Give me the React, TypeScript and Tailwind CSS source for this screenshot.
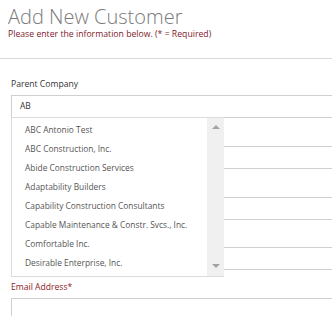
import React from 'react';

const companies = [
    'ABC Antonio Test',
    'ABC Construction, Inc.',
    'Abide Construction Services',
    'Adaptability Builders',
    'Capability Construction Consultants',
    'Capable Maintenance & Constr. Svcs., Inc.',
    'Comfortable Inc.',
    'Desirable Enterprise, Inc.',
];

// fields that sit behind the open dropdown, their labels are covered
const hiddenFields = ['name', 'address', 'city'];

function Field({ label, required, value, children }: { label?: string; required?: boolean; value?: string; children?: React.ReactNode }) {
    return (
        <div className="relative">
            <div
                className={`h-[12px] mb-[5px] text-[8.6px] leading-[12px] font-medium ${
                    required ? 'text-[#8a1c26]' : 'text-[#333]'
                }`}
            >
                {label}
            </div>
            <div className="relative w-[340px] h-[23px] border border-[#cfcfcf] bg-white flex items-center pl-[8px] text-[8.5px] text-[#333]">
                {value}
            </div>
            {children}
        </div>
    );
}

function CompanyDropdown() {
    return (
        <div className="absolute z-10 left-0 top-[39px] w-[213px] h-[160px] bg-white border-t border-b border-l border-[#dcdcdc] flex">
            <ul className="flex-1 pt-[2px] pl-[13px] text-[8.4px] text-[#555] leading-[19px]">
                {companies.map((c) => (
                    <li key={c} className="h-[19px] whitespace-nowrap">
                        {c}
                    </li>
                ))}
            </ul>
            <div className="w-[17px] h-full bg-[#f0f0f0] flex flex-col items-center justify-between pt-[7px] pb-[8px]">
                <span className="block w-0 h-0 border-l-[4px] border-r-[4px] border-b-[4px] border-l-transparent border-r-transparent border-b-[#a3a3a3]" />
                <span className="block w-0 h-0 border-l-[4px] border-r-[4px] border-t-[4px] border-l-transparent border-r-transparent border-t-[#a3a3a3]" />
            </div>
        </div>
    );
}

export default function App() {
    return (
        <div
            className="w-[332px] h-[316px] overflow-hidden bg-white"
            style={{ fontFamily: '"Open Sans", "Liberation Sans", sans-serif' }}
        >
            <div className="pl-[8px] pt-[5px]">
                <h1 className="text-[20px] leading-[24px] text-[#7a7a7a] font-light">Add New Customer</h1>
                <p className="text-[8.7px] leading-[10px] text-[#7d1a2c]">
                    Please enter the information below. (* = Required)
                </p>
            </div>

            <div className="mt-[19px] h-px bg-[#dadada]" />

            <div className="mt-[19px] pl-[11px] flex flex-col gap-[10.75px]">
                <Field label="Parent Company" value="AB">
                    <CompanyDropdown />
                </Field>
                {hiddenFields.map((f) => (
                    <Field key={f} />
                ))}
                <Field label="Email Address*" required />
            </div>
        </div>
    );
}
